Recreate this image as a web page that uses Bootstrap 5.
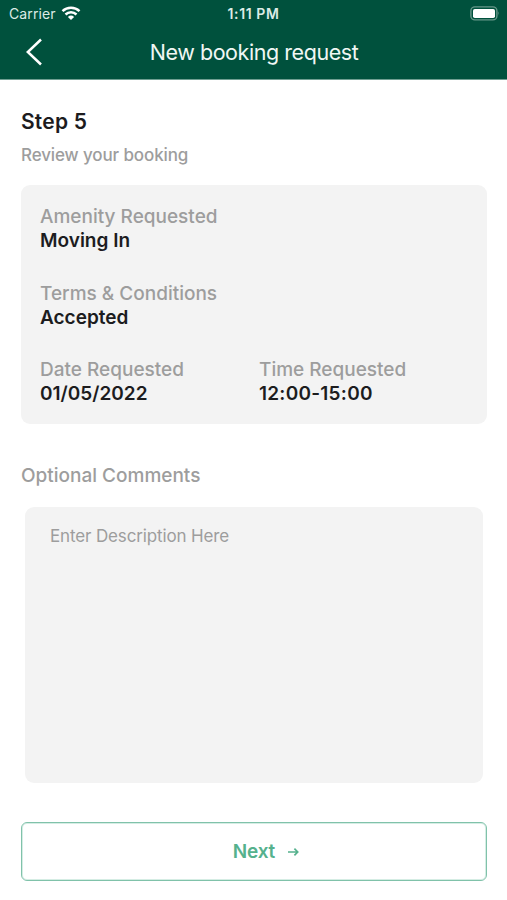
<!DOCTYPE html>
<html lang="en">
<head>
<meta charset="utf-8">
<meta name="viewport" content="width=device-width, initial-scale=1">
<title>New booking request</title>
<link href="https://cdn.jsdelivr.net/npm/bootstrap@5.3.0/dist/css/bootstrap.min.css" rel="stylesheet">
<style>
body { font-family: Inter, "Liberation Sans", sans-serif; color: #1c1c1e; }
.screen { height: 900px; }
.app-header { background: #00513d; height: 80px; border-bottom: 1px solid #6f9f92; }
.status-bar { height: 27px; padding: 0 7px 0 9px; font-size: 14px; line-height: 27px; color: #dcebe6; }
.carrier { letter-spacing: .1px; }
.wifi { margin-left: 5px; }
.clock { letter-spacing: .6px; padding-right: 2px; }
.title-bar { height: 52px; padding: 0 26px; }
.app-title { font-size: 21.5px; line-height: 50px; font-weight: 400; color: #f0f7f4; letter-spacing: -.44px; padding: 0 0 2px 1px; }
.side-slot { width: 60px; }
.back-link { padding-bottom: 2px; }
.page-body { padding: 28px 20px 0 21px; }
.step-title { font-size: 21px; line-height: 28px; font-weight: 600; letter-spacing: .2px; }
.muted { color: #9d9d9d; }
.step-note { font-size: 17px; line-height: 24px; margin-top: 7px; font-weight: 500; letter-spacing: -.12px; }
.review-panel { background: #f3f3f3; border-radius: 9px; height: 239px; margin-top: 18px; padding: 20px 19px; }
.field-label { font-size: 19px; line-height: 24px; font-weight: 500; }
.field-value { font-size: 19px; line-height: 24px; font-weight: 600; }
.review-panel .field { margin-bottom: 28.6px; }
.time-value { letter-spacing: .25px; }
.time-col { padding-left: 5px; }
.comments-label { font-size: 19px; line-height: 24px; margin-top: 40px; font-weight: 500; }
.comments-box { background: #f3f3f3; border-radius: 9px; height: 276px; margin: 19px 4px 0; padding: 17px 25px; font-size: 17px; line-height: 24px; letter-spacing: -.14px; resize: none; }
.comments-box::placeholder { color: #9d9d9d; }
.next-btn { height: 59px; margin-top: 39px; padding: 2px 0 0 24px; border: 1px solid #80c2aa; box-shadow: inset 0 0 0 1px #d5ede4; border-radius: 6px; color: #55b18d; font-size: 19px; font-weight: 600; letter-spacing: -.2px; }
.next-arrow { margin: 0 0 1px 13px; }
</style>
<script src="https://cdn.jsdelivr.net/npm/bootstrap@5.3.0/dist/js/bootstrap.bundle.min.js"></script>
</head>
<body class="bg-white">
<div class="screen overflow-hidden">
  <header class="app-header">
    <div class="status-bar d-flex justify-content-between align-items-center">
      <div class="col d-flex align-items-center"><span class="carrier">Carrier</span>
        <svg class="wifi" width="20" height="15" viewBox="0 0 20 15" fill="none" stroke="#fff" stroke-width="2.5"><path d="M1.5 5.2a12.4 12.4 0 0 1 17 0M4.5 8.5a8 8 0 0 1 11 0"/><path d="M10 14 6.9 10.9a4.5 4.5 0 0 1 6.2 0Z" fill="#fff" stroke="none"/></svg>
      </div>
      <div class="clock fw-semibold">1:11 PM</div>
      <div class="col d-flex justify-content-end">
        <svg width="30" height="15" viewBox="0 0 30 15"><rect x=".9" y=".9" width="26" height="13" rx="4" fill="none" stroke="#669789" stroke-width="1.4"/><rect x="3" y="3" width="22" height="9" rx="1.8" fill="#fff"/><path d="M28.3 5.2q1.7 2.1 0 4.4Z" fill="#669789"/></svg>
      </div>
    </div>
    <nav class="title-bar d-flex justify-content-between align-items-center">
      <a href="#" class="side-slot back-link d-flex" aria-label="Back"><svg width="17" height="28" viewBox="0 0 17 28" fill="none" stroke="#fff" stroke-width="2.5"><path d="M15 1.5 1.8 14 15 26.5"/></svg></a>
      <h1 class="app-title m-0">New booking request</h1>
      <div class="side-slot"></div>
    </nav>
  </header>
  <main class="page-body">
    <h2 class="step-title mb-0">Step 5</h2>
    <p class="step-note muted mb-0">Review your booking</p>
    <section class="review-panel">
      <div class="field">
        <div class="field-label muted">Amenity Requested</div>
        <div class="field-value">Moving In</div>
      </div>
      <div class="field">
        <div class="field-label muted">Terms &amp; Conditions</div>
        <div class="field-value">Accepted</div>
      </div>
      <div class="row gx-0">
        <div class="col-6">
          <div class="field-label muted">Date Requested</div>
          <div class="field-value">01/05/2022</div>
        </div>
        <div class="col-6 time-col">
          <div class="field-label muted">Time Requested</div>
          <div class="field-value time-value">12:00-15:00</div>
        </div>
      </div>
    </section>
    <label class="comments-label muted d-block" for="comments">Optional Comments</label>
    <div class="d-flex"><textarea id="comments" class="comments-box border-0 flex-fill" placeholder="Enter Description Here"></textarea></div>
    <button type="button" class="btn next-btn w-100 d-flex justify-content-center align-items-center">Next
      <svg class="next-arrow" width="11" height="10" viewBox="0 0 11 10" fill="none" stroke="currentColor" stroke-width="1.7"><path d="M0 5h9.6M6.4 1.7 9.7 5 6.4 8.3"/></svg>
    </button>
  </main>
</div>
</body>
</html>
